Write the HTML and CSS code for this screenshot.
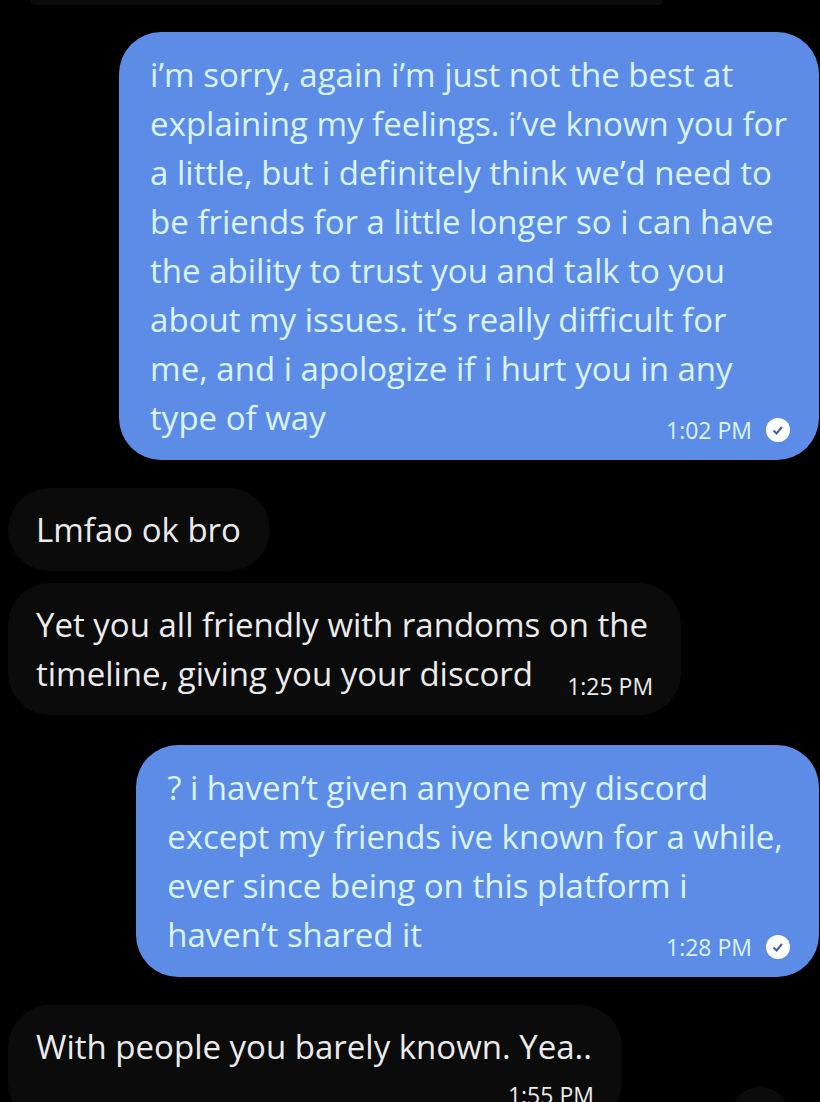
FILE: index.html
```html
<!DOCTYPE html>
<html lang="en">
<head>
<meta charset="utf-8">
<title>Messages</title>
<link rel="stylesheet" href="styles.css">
</head>
<body>
<main class="chat">
	<div class="bubble received previous"></div>

	<div class="bubble sent long">
		i’m sorry, again i’m just not the best at<br>
		explaining my feelings. i’ve known you for<br>
		a little, but i definitely think we’d need to<br>
		be friends for a little longer so i can have<br>
		the ability to trust you and talk to you<br>
		about my issues. it’s really difficult for<br>
		me, and i apologize if i hurt you in any
		<div class="last-line">
			<span>type of way</span>
			<span class="meta"><time>1:02 PM</time>
				<svg class="check" viewBox="0 0 24 24" role="img" aria-label="Seen"><circle cx="12" cy="12" r="12"/><path d="M7.5 12.5l3 3 5.500-6.500"/></svg>
			</span>
		</div>
	</div>

	<div class="bubble received short">Lmfao ok bro</div>

	<div class="bubble received medium">
		Yet you all friendly with randoms on the
		<div class="last-line">
			<span>timeline, giving you your discord</span>
			<span class="meta"><time>1:25 PM</time></span>
		</div>
	</div>

	<div class="bubble sent reply">
		? i haven’t given anyone my discord<br>
		except my friends ive known for a while,<br>
		ever since being on this platform i
		<div class="last-line">
			<span>haven’t shared it</span>
			<span class="meta"><time>1:28 PM</time>
				<svg class="check" viewBox="0 0 24 24" role="img" aria-label="Seen"><circle cx="12" cy="12" r="12"/><path d="M7.5 12.5l3 3 5.500-6.500"/></svg>
			</span>
		</div>
	</div>

	<div class="bubble received last">
		With people you barely known. Yea..
		<div class="last-line time-only">
			<span class="meta"><time>1:55 PM</time></span>
		</div>
	</div>

	<button class="scroll-down" type="button" aria-label="Scroll to bottom"></button>
</main>
</body>
</html>
```
FILE: styles.css
```css
body {
	margin: 0;
	background-color: #000;
	color: #ebebeb;
	font-family: "Open Sans", "Noto Sans", sans-serif;
	font-size: 33px;
	line-height: 49px;
}
.chat {
	position: relative;
	display: flex;
	flex-direction: column;
	height: 100vh;
	overflow: hidden;
	padding: 0 1px 0 8px;
	box-sizing: border-box;
}
.bubble {
	flex-shrink: 0;
	box-sizing: border-box;
	padding: 17px 28px;
	border-radius: 42px;
	white-space: nowrap;
}
.received {
	align-self: flex-start;
	background-color: #0b0b0b;
}
.sent {
	align-self: flex-end;
	padding: 18px 29px 18px 31px;
	background-color: #5d8ce6;
	color: #d9f4ff;
}

/* bubble widths, as a share of the chat */
.long {
	width: 86.3%;
	margin: 27px 0 28px;
}
.short {
	width: 32.3%;
	margin-bottom: 12px;
}
.medium {
	width: 83%;
	margin-bottom: 30px;
}
.reply {
	width: 84.2%;
	margin-bottom: 28px;
}
.last {
	width: 75.7%;
}
.previous {
	width: 78%;
	height: 5px;
	padding: 0;
	margin-left: 22px;
	border-radius: 0 0 8px 8px;
}

.last-line {
	display: flex;
	justify-content: space-between;
	align-items: flex-end;
}
.time-only {
	justify-content: flex-end;
	margin-top: 12px;
}
.meta {
	display: flex;
	align-items: center;
	gap: 14px;
	font-size: 23px;
	line-height: 24px;
}
.check {
	width: 24px;
	height: 24px;
}
.check circle {
	fill: #fff;
}
.check path {
	fill: none;
	stroke: #41619f;
	stroke-width: 2;
}
.scroll-down {
	position: absolute;
	right: 30px;
	bottom: -45px;
	width: 60px;
	height: 60px;
	border: none;
	border-radius: 50%;
	background-color: #0b0b0b;
}
```
